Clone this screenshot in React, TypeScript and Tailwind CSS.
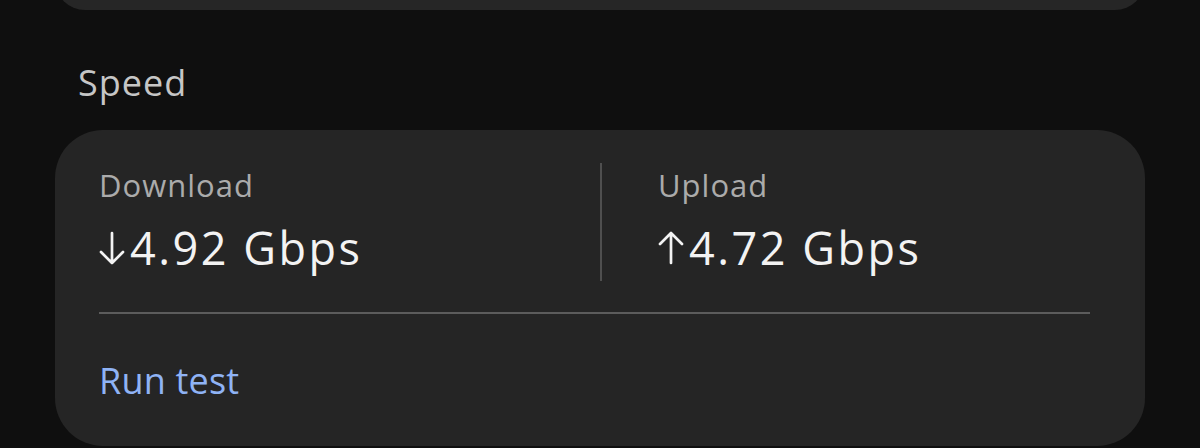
const font = { fontFamily: "'Open Sans', 'Noto Sans', sans-serif" };

export default function App() {
  return (
    <div className="h-[448px] overflow-hidden bg-[#0f0f0f] px-[55px]" style={font}>
      {/* tail of the card above */}
      <div className="-mt-[50px] h-[60px] rounded-[48px] bg-[#262626]" />

      <h2 className="mt-[51px] pl-[23px] text-[36px] leading-[44px] tracking-[1px] text-[#c6c6c6]">Speed</h2>

      <div className="mt-[25px] rounded-[48px] bg-[#252525] pl-[44px] pr-[55px] pt-[33px] pb-[43px]">
        <div className="flex">
          <SpeedStat label="Download" value="4.92 Gbps" dir="down" className="w-[501px] shrink-0" />
          <div className="w-[2px] bg-[#4f4f4f]" />
          <SpeedStat label="Upload" value="4.72 Gbps" dir="up" className="flex-1 pl-[56px]" />
        </div>
        <div className="mt-[31px] h-[2px] bg-[#5c5c5c]" />
        <button className="mt-[45px] text-[36px] leading-[44px] tracking-[0.2px] text-[#8fb3f5]">Run test</button>
      </div>
    </div>
  );
}

function Arrow({ dir }: { dir: "up" | "down" }) {
  return (
    <svg
      viewBox="0 0 26 34"
      className="mr-[5px] h-[34px] w-[26px] shrink-0"
      fill="none"
      stroke="currentColor"
      strokeWidth={2.7}
      strokeLinecap="round"
      strokeLinejoin="round"
    >
      {dir === "down" ? (
        <path d="M13 2v30M2 21l11 11 11-11" />
      ) : (
        <path d="M13 32V2M2 13 13 2l11 11" />
      )}
    </svg>
  );
}

function SpeedStat({
  label,
  value,
  dir,
  className,
}: {
  label: string;
  value: string;
  dir: "up" | "down";
  className: string;
}) {
  return (
    <div className={`pt-[4px] pb-[7px] ${className}`}>
      <p className="text-[31px] leading-[36px] tracking-[1px] text-[#ababab]">{label}</p>
      <p className="mt-[19px] flex items-center text-[45px] leading-[52px] tracking-[2.5px] text-[#f3f3f3]">
        <Arrow dir={dir} />
        {value}
      </p>
    </div>
  );
}
